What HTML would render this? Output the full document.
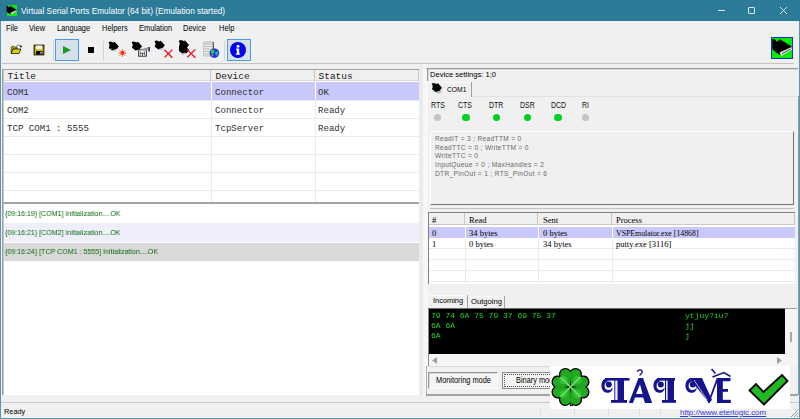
<!DOCTYPE html>
<html><head><meta charset="utf-8">
<style>
*{margin:0;padding:0;box-sizing:border-box}
html,body{width:800px;height:419px;overflow:hidden;background:#f0f0f0;font-family:"Liberation Sans",sans-serif;position:relative}
.a{position:absolute}
.t{position:absolute;white-space:nowrap;line-height:1;transform-origin:0 0;-webkit-font-smoothing:antialiased}
.mono{font-family:"Liberation Mono",monospace}
.serif{font-family:"Liberation Serif",serif}
.m{font-size:8.2px;top:25px;color:#000;transform:scaleX(0.91)}
.cm{font-size:9.4px;color:#303030;transform:scaleX(0.97)}
.hd{font-size:9.5px;color:#1a1a1a}
.sig{font-size:8.6px;top:100.5px;color:#111;transform:scaleX(0.81)}
.led{position:absolute;top:113.5px;width:7.4px;height:7.4px;border-radius:50%;background:#00d020}
.led.off{background:#c4c4c4}
.lg{font-size:7.6px;color:#0c680c;will-change:transform;transform:scaleX(0.93)}
.pl{font-size:8.5px;color:#000}
.gl{position:absolute;background:#ebebeb}
</style></head><body>
<!-- window frame -->
<div class="a" style="left:0;top:0;width:800px;height:21px;background:#2b7a98"></div>
<div class="a" style="left:0;top:21px;width:1px;height:398px;background:#5896b2"></div>
<div class="a" style="left:799px;top:21px;width:1px;height:398px;background:#5896b2"></div>
<div class="a" style="left:0;top:418px;width:800px;height:1px;background:#5e9ab4"></div>
<!-- title icon -->
<svg class="a" style="left:6px;top:5px" width="11" height="11" viewBox="0 0 22 22">
<rect x="0" y="0" width="22" height="22" fill="#10e810"/>
<path d="M0 1.5 L4.2 2 L5.5 4.5 L7 4.5 L8.4 1.5 L21 9.3 L21 11.3 L10.5 17 L8.5 18.5 L0 13Z" fill="#000"/>
<path d="M8.5 15.5 L20.5 9.9 L21 13 L10.5 19.5Z" fill="#c8c8c8"/>
<rect x="0" y="0" width="1.5" height="22" fill="#3040d0"/>
</svg>
<div class="t" style="left:21px;top:6px;font-size:9.8px;color:#fff;transform:scaleX(0.845)">Virtual Serial Ports Emulator (64 bit) (Emulation started)</div>
<!-- window controls -->
<div class="a" style="left:718px;top:10px;width:7px;height:1px;background:#e4eef2"></div>
<div class="a" style="left:748px;top:7px;width:7px;height:7px;border:1px solid #dce9ee;border-radius:1px"></div>
<svg class="a" style="left:780px;top:7px" width="7" height="7" viewBox="0 0 7 7"><path d="M0 0L7 7M7 0L0 7" stroke="#e4eef2" stroke-width="0.9"/></svg>

<!-- menu -->
<div class="t m" style="left:6px">File</div>
<div class="t m" style="left:29px">View</div>
<div class="t m" style="left:57px">Language</div>
<div class="t m" style="left:102px">Helpers</div>
<div class="t m" style="left:139px">Emulation</div>
<div class="t m" style="left:183px">Device</div>
<div class="t m" style="left:219px">Help</div>

<!-- toolbar -->
<div class="a" style="left:55px;top:39px;width:24px;height:22px;background:#d5e1ec;border:1px solid #4a9ae8"></div>
<div class="a" style="left:227px;top:39px;width:24px;height:22px;background:#d5e1ec;border:1px solid #4a9ae8"></div>
<div class="a" style="left:53px;top:41px;width:1px;height:19px;background:#d4d4d4"></div>
<div class="a" style="left:103px;top:41px;width:1px;height:19px;background:#d4d4d4"></div>
<div class="a" style="left:224px;top:41px;width:1px;height:19px;background:#d4d4d4"></div>
<div class="a" style="left:2px;top:63px;width:792px;height:1px;background:#c4c4c4"></div>

<!-- open icon -->
<svg class="a" style="left:10px;top:44px" width="13" height="11" viewBox="10 44 13 11">
<path d="M11.2 47 L13 46 L14.5 47 L17 47 L17 49 L13 49 L11.2 53.5Z" fill="#b0aa10" stroke="#1a1a00" stroke-width="0.6"/>
<path d="M11.2 53.5 L13 49 L21 49 L19 53.5Z" fill="#d8d018" stroke="#1a1a00" stroke-width="0.8"/>
<path d="M16.5 46 Q18.5 44.2 20.5 45.8" stroke="#444" stroke-width="0.7" fill="none"/>
<circle cx="21" cy="46.5" r="0.9" fill="#000"/>
</svg>
<!-- save icon -->
<svg class="a" style="left:33px;top:44px" width="12" height="12" viewBox="33 44 12 12">
<rect x="34.2" y="45.2" width="9.6" height="9.6" fill="#c4bc18" stroke="#2a2a08" stroke-width="1.2"/>
<rect x="36" y="45.5" width="6" height="3.6" fill="#f2f2f2"/>
<rect x="36" y="51" width="6.5" height="3.5" fill="#0a0a0a"/>
<rect x="40.3" y="51.8" width="1.4" height="1.8" fill="#e0e0e0"/>
</svg>
<!-- play -->
<svg class="a" style="left:63px;top:46px" width="8" height="8" viewBox="0 0 8 8"><path d="M0 0 L8 4 L0 8Z" fill="#1a9a1a"/></svg>
<!-- stop -->
<div class="a" style="left:88px;top:47px;width:6px;height:6px;background:#000"></div>

<!-- device icons -->
<svg class="a" style="left:104px;top:38px" width="120" height="22" viewBox="104 38 120 22">
<defs>
<path id="cb" d="M-5.3 -4.8 L-3 -5.4 L-0.5 -4.4 L1 -5 L5 -0.5 L2.5 2.8 L-1.5 3.6 L-5 1 L-4.2 -2 Z"/>
</defs>
<!-- icon1 -->
<use href="#cb" x="113.8" y="47" fill="#000"/>
<path d="M112.3 50.3 L116.5 48.8 L118.2 49.8 L114 51.8Z" fill="#c4c4c4"/>
<circle cx="111.8" cy="48.5" r="0.5" fill="#a0a040"/>
<g stroke="#ff5a5a" stroke-width="0.9"><path d="M122.4 49v8M118.4 53h8M119.6 50.2l5.6 5.6M125.2 50.2l-5.6 5.6"/></g>
<circle cx="122.4" cy="53" r="1.9" fill="#ff1800"/>
<circle cx="121.6" cy="53.9" r="0.7" fill="#ffc000"/>
<!-- icon2 -->
<use href="#cb" x="137" y="46.8" fill="#000"/>
<rect x="138.6" y="49.8" width="7.8" height="6.4" fill="#fafafa" stroke="#3a3a3a" stroke-width="1"/>
<path d="M140.3 51.5v4M142.5 52.5v3.5M144.6 51.5v4M140.3 53.3h4.3" stroke="#444" stroke-width="0.8"/>
<path d="M141 49.3 L148 47.3 L148.5 49.5 L143 50.5Z" fill="#999"/>
<rect x="148.4" y="47" width="1.5" height="4.5" fill="#1a1a50"/>
<!-- icon3 -->
<use href="#cb" x="159.8" y="45.8" fill="#000"/>
<path d="M158.5 49 L162.5 48 L164 49 L160 50.5Z" fill="#c8c8c8"/>
<path d="M164.4 49.8 L172.4 57.8 M172.4 49.6 L164.6 57.4" stroke="#e8101c" stroke-width="1.3"/>
<!-- icon4 -->
<use href="#cb" x="184" y="45.5" fill="#000"/>
<path d="M179 46 L183 45 L189 49.5 L187 53 L183 54 L179 51Z" fill="#000"/>
<path d="M181 53.5 L185 52.5 L186.5 53.5 L182.5 55Z" fill="#b8b8b8"/>
<path d="M187.2 49.6 L195.4 57.8 M195.4 49.4 L187.4 57.2" stroke="#e8101c" stroke-width="1.3"/>
<!-- icon5 -->
<rect x="203.8" y="42" width="9.8" height="14" fill="#ececec" stroke="#a8a8a8" stroke-width="0.7"/>
<rect x="203.8" y="42" width="9.8" height="3" fill="#cfcfcf"/>
<path d="M204.5 46.5h8M204.5 49h8M204.5 51.5h8M204.5 54h8" stroke="#b0b0b0" stroke-width="0.8"/>
<rect x="212.8" y="42" width="0.9" height="9" fill="#333"/>
<circle cx="214.4" cy="53.2" r="4.8" fill="#1a30e0"/>
<path d="M211 50.5 Q213 49 214.5 50.5 L213.5 53.5 L211.5 54.5Z" fill="#20e040"/>
<path d="M215 52 L218 51 L218.5 54.5 L216 56Z" fill="#30a0a0"/>
<circle cx="212.5" cy="55.5" r="1" fill="#c08020"/>
</svg>
<!-- info -->
<svg class="a" style="left:230px;top:42px" width="16" height="16" viewBox="0 0 16 16">
<circle cx="8" cy="8" r="8" fill="#0000f0"/>
<circle cx="8" cy="4.2" r="1.5" fill="#fff"/>
<path d="M6 6.5 H9.2 V11.5 H10.2 V12.8 H5.8 V11.5 H6.8 V7.8 H6Z" fill="#fff"/>
</svg>
<!-- top-right connector icon -->
<svg class="a" style="left:771px;top:37px" width="22" height="22" viewBox="0 0 22 22">
<rect x="0.5" y="0.5" width="21" height="21" fill="#00ec00" stroke="#1a30e0" stroke-width="1"/>
<path d="M1.2 2.1 L4.2 2.4 L5.5 4.5 L7 4.5 L8.4 2.1 L20.4 9.3 L20.6 11.3 L10.5 17 L8.5 17.9 L1.2 12.2Z" fill="#000"/>
<path d="M8.5 15.5 L20.5 9.9 L20.8 12.7 L10.5 19Z" fill="#e4e4e4"/>
<path d="M11 16.8 L19.5 12" stroke="#333" stroke-width="0.9"/>
</svg>

<!-- ============ top list ============ -->
<div class="a" style="left:2px;top:69px;width:418px;height:1px;background:#a0a0a0"></div>
<div class="a" style="left:2px;top:69px;width:1px;height:134px;background:#a0a0a0"></div>
<div class="a" style="left:3px;top:70px;width:416px;height:132px;background:#fff"></div>
<div class="a" style="left:3px;top:70px;width:416px;height:11px;background:#efefef"></div>
<div class="a" style="left:3px;top:80px;width:416px;height:1px;background:#d6d6d6"></div>
<div class="a" style="left:210px;top:70px;width:1px;height:11px;background:#c8c8c8"></div>
<div class="a" style="left:314px;top:70px;width:1px;height:11px;background:#c8c8c8"></div>
<div class="a" style="left:418px;top:70px;width:1px;height:11px;background:#d0d0d0"></div>
<div class="t mono hd" style="left:7.5px;top:71.7px">Title</div>
<div class="t mono hd" style="left:215.5px;top:71.7px">Device</div>
<div class="t mono hd" style="left:318.5px;top:71.7px">Status</div>
<div class="a" style="left:3px;top:82px;width:416px;height:18px;background:#c8c8fb"></div>
<div class="gl" style="left:3px;top:100px;width:416px;height:1px"></div>
<div class="gl" style="left:3px;top:118px;width:416px;height:1px"></div>
<div class="gl" style="left:3px;top:136px;width:416px;height:1px"></div>
<div class="gl" style="left:3px;top:154px;width:416px;height:1px"></div>
<div class="gl" style="left:3px;top:172px;width:416px;height:1px"></div>
<div class="gl" style="left:3px;top:190px;width:416px;height:1px"></div>
<div class="a" style="left:211px;top:82px;width:1px;height:120px;background:#fff"></div>
<div class="a" style="left:315px;top:82px;width:1px;height:120px;background:#fff"></div>
<div class="gl" style="left:211px;top:100px;width:1px;height:102px"></div>
<div class="gl" style="left:315px;top:100px;width:1px;height:102px"></div>
<div class="a" style="left:3px;top:70px;width:1px;height:132px;background:#c4c4c4"></div>
<div class="t mono cm" style="left:7px;top:88px">COM1</div>
<div class="t mono cm" style="left:215px;top:88px">Connector</div>
<div class="t mono cm" style="left:318px;top:88px">OK</div>
<div class="t mono cm" style="left:7px;top:106px">COM2</div>
<div class="t mono cm" style="left:215px;top:106px">Connector</div>
<div class="t mono cm" style="left:318px;top:106px">Ready</div>
<div class="t mono cm" style="left:7px;top:124px">TCP COM1 : 5555</div>
<div class="t mono cm" style="left:215px;top:124px">TcpServer</div>
<div class="t mono cm" style="left:318px;top:124px">Ready</div>

<!-- ============ log pane ============ -->
<div class="a" style="left:2px;top:202px;width:418px;height:2px;background:#a4a4a4"></div>
<div class="a" style="left:2px;top:204px;width:1px;height:191px;background:#a0a0a0"></div>
<div class="a" style="left:3px;top:204px;width:416px;height:191px;background:#fff"></div>
<div class="a" style="left:3px;top:223px;width:416px;height:19px;background:#efeffc"></div>
<div class="a" style="left:3px;top:243px;width:416px;height:18px;background:#d9d9d9"></div>
<div class="a" style="left:3px;top:204px;width:1px;height:191px;background:#c4c4c4"></div>
<div class="t lg" style="left:5px;top:210px">{09:16:19} [COM1] Initialization....OK</div>
<div class="t lg" style="left:5px;top:229px">{09:16:21} [COM2] Initialization....OK</div>
<div class="t lg" style="left:5px;top:248px">{09:16:24} [TCP COM1 : 5555] Initialization....OK</div>

<!-- ============ right pane ============ -->
<div class="a" style="left:419px;top:64px;width:4px;height:331px;background:#ebebeb"></div>
<div class="a" style="left:423px;top:64px;width:5px;height:331px;background:#f7f7f7"></div>
<div class="a" style="left:426px;top:68px;width:372px;height:1px;background:#999"></div>
<div class="a" style="left:428px;top:69px;width:370px;height:1px;background:#dadada"></div>
<div class="a" style="left:427px;top:68px;width:1px;height:13px;background:#999"></div>
<div class="a" style="left:428px;top:69px;width:1px;height:12px;background:#dadada"></div>
<div class="t" style="left:430px;top:71px;font-size:7.8px;color:#000;transform:scaleX(0.97)">Device settings: 1;0</div>
<!-- tab -->
<div class="a" style="left:471px;top:82px;width:1px;height:15px;background:#a0a0a0"></div>
<div class="a" style="left:428px;top:82px;width:43px;height:1px;background:#fafafa"></div>
<svg class="a" style="left:430px;top:82px" width="16" height="14" viewBox="430 82 16 14"><use href="#cb" x="437" y="88.3" fill="#000"/><path d="M436 92.5 L440.5 90.5 L442.5 91.8 L438 93.8Z" fill="#b8b8b8"/></svg>
<div class="t" style="left:447px;top:86px;font-size:7.8px;color:#000;transform:scaleX(0.86)">COM1</div>
<div class="a" style="left:472px;top:96px;width:326px;height:1px;background:#e2e2e2"></div>
<div class="a" style="left:798px;top:96px;width:1px;height:299px;background:#8a9ca4"></div>

<!-- signal labels & leds -->
<div class="t sig" style="left:431px">RTS</div>
<div class="t sig" style="left:458px">CTS</div>
<div class="t sig" style="left:489px">DTR</div>
<div class="t sig" style="left:520px">DSR</div>
<div class="t sig" style="left:551px">DCD</div>
<div class="t sig" style="left:582px">RI</div>
<div class="led off" style="left:433.8px"></div>
<div class="led" style="left:462.2px"></div>
<div class="led" style="left:492.8px"></div>
<div class="led" style="left:523.8px"></div>
<div class="led" style="left:554.4px"></div>
<div class="led off" style="left:581.9px"></div>

<!-- info box -->
<div class="a" style="left:430px;top:131px;width:364px;height:74px;border-top:1px solid #fff;border-left:1px solid #fff;border-right:1px solid #707070;border-bottom:1px solid #707070"></div>
<div class="t" style="left:435px;top:134.8px;font-size:6.6px;letter-spacing:0.33px;color:#6a6a6a;line-height:8.8px">ReadIT = 3 ; ReadTTM = 0<br>ReadTTC = 0 ; WriteTTM = 0<br>WriteTTC = 0<br>InputQueue = 0 ; MaxHandles = 2<br>DTR_PinOut = 1 ; RTS_PinOut = 6</div>
<div class="a" style="left:430px;top:208px;width:364px;height:1px;background:#c4c4c4"></div>

<!-- process list -->
<div class="a" style="left:428px;top:212px;width:367px;height:1px;background:#808080"></div>
<div class="a" style="left:428px;top:212px;width:1px;height:72px;background:#808080"></div>
<div class="a" style="left:429px;top:213px;width:366px;height:71px;background:#fff"></div>
<div class="a" style="left:429px;top:213px;width:366px;height:12px;background:#f0f0f0"></div>
<div class="a" style="left:429px;top:224px;width:366px;height:1px;background:#c8c8c8"></div>
<div class="a" style="left:464px;top:213px;width:1px;height:12px;background:#c8c8c8"></div>
<div class="a" style="left:537px;top:213px;width:1px;height:12px;background:#c8c8c8"></div>
<div class="a" style="left:611px;top:213px;width:1px;height:12px;background:#c8c8c8"></div>
<div class="a" style="left:794px;top:213px;width:1px;height:12px;background:#c8c8c8"></div>
<div class="a" style="left:429px;top:227px;width:366px;height:11px;background:#c8c8fb"></div>
<div class="gl" style="left:429px;top:248px;width:366px;height:1px"></div>
<div class="gl" style="left:429px;top:259px;width:366px;height:1px"></div>
<div class="gl" style="left:429px;top:270px;width:366px;height:1px"></div>
<div class="gl" style="left:429px;top:281px;width:366px;height:1px"></div>
<div class="a" style="left:465px;top:225px;width:1px;height:13px;background:#fff"></div>
<div class="a" style="left:538px;top:225px;width:1px;height:13px;background:#fff"></div>
<div class="a" style="left:612px;top:225px;width:1px;height:13px;background:#fff"></div>
<div class="gl" style="left:465px;top:238px;width:1px;height:45px"></div>
<div class="gl" style="left:538px;top:238px;width:1px;height:45px"></div>
<div class="gl" style="left:612px;top:238px;width:1px;height:45px"></div>
<div class="t serif pl" style="left:432px;top:216px">#</div>
<div class="t serif pl" style="left:469px;top:216px">Read</div>
<div class="t serif pl" style="left:543px;top:216px">Sent</div>
<div class="t serif pl" style="left:616px;top:216px">Process</div>
<div class="t serif pl" style="left:432px;top:229px">0</div>
<div class="t serif pl" style="left:469px;top:229px">34 bytes</div>
<div class="t serif pl" style="left:543px;top:229px">0 bytes</div>
<div class="t serif pl" style="left:616px;top:229px;transform:scaleX(0.92)">VSPEmulator.exe [14868]</div>
<div class="t serif pl" style="left:432px;top:240px">1</div>
<div class="t serif pl" style="left:469px;top:240px">0 bytes</div>
<div class="t serif pl" style="left:543px;top:240px">34 bytes</div>
<div class="t serif pl" style="left:616px;top:240px">putty.exe [3116]</div>

<!-- incoming/outgoing tabs -->
<div class="a" style="left:428px;top:295px;width:39px;height:1px;background:#fafafa"></div>
<div class="a" style="left:467px;top:295px;width:1px;height:14px;background:#a0a0a0"></div>
<div class="t" style="left:433px;top:297px;font-size:7.8px;color:#000;transform:scaleX(0.95)">Incoming</div>
<div class="a" style="left:468px;top:296px;width:36px;height:1px;background:#fafafa"></div>
<div class="a" style="left:504px;top:296px;width:1px;height:13px;background:#a0a0a0"></div>
<div class="t" style="left:471px;top:298px;font-size:7.8px;color:#000;transform:scaleX(0.98)">Outgoing</div>
<div class="a" style="left:505px;top:308px;width:292px;height:1px;background:#a0a0a0"></div>

<!-- console -->
<div class="a" style="left:428px;top:308px;width:357px;height:1px;background:#707070"></div>
<div class="a" style="left:428px;top:309px;width:357px;height:45px;background:#000"></div>
<div class="a" style="left:785px;top:309px;width:12px;height:57px;background:#f4f4f4"></div>
<div class="t mono" style="left:431px;top:311px;font-size:8px;line-height:9.8px;color:#22d022;will-change:transform">79 74 6A 75 79 37 69 75 37<br>6A 6A<br>6A</div>
<div class="t mono" style="left:685px;top:311px;font-size:8px;line-height:9.8px;color:#22d022;will-change:transform">ytjuy?iu?<br>jj<br>j</div>
<div class="a" style="left:790px;top:332px;width:2px;height:10px;background:#a8a8a8"></div>
<div class="a" style="left:429px;top:354px;width:356px;height:12px;background:#f5f5f5"></div>
<svg class="a" style="left:432px;top:357px" width="5" height="7" viewBox="0 0 5 7"><path d="M5 0 L0 3.5 L5 7Z" fill="#a0a0a0"/></svg>
<svg class="a" style="left:777px;top:357px" width="5" height="7" viewBox="0 0 5 7"><path d="M0 0 L5 3.5 L0 7Z" fill="#a0a0a0"/></svg>
<div class="a" style="left:428px;top:309px;width:1px;height:57px;background:#8a8a8a"></div>
<div class="a" style="left:428px;top:366px;width:357px;height:1px;background:#dadada"></div>
<div class="a" style="left:426px;top:366px;width:1px;height:29px;background:#b0b0b0"></div>

<!-- buttons -->
<div class="a" style="left:428px;top:372px;width:70px;height:17px;background:#f4f4f4;border:1px solid #fafafa;border-top-color:#999;border-left-color:#999;box-shadow:inset 1px 1px 0 #d8d8d8"></div>
<div class="t" style="left:436px;top:376.5px;font-size:8.2px;color:#000;transform:scaleX(0.9)">Monitoring mode</div>
<div class="a" style="left:502px;top:372px;width:70px;height:17px;background:#f4f4f4;border:1px solid #8a8a8a"></div>
<div class="a" style="left:504px;top:374px;width:66px;height:13px;border:1px dotted #555"></div>
<div class="t" style="left:516px;top:376.5px;font-size:8.2px;color:#000;transform:scaleX(0.9)">Binary mode</div>

<div class="a" style="left:426px;top:394px;width:372px;height:2px;background:#a4a4a4"></div>

<!-- status bar -->
<svg class="a" style="left:789px;top:408px" width="10" height="10" viewBox="0 0 10 10"><path d="M9 2 L2 9 M9 5 L5 9 M9 8 L8 9" stroke="#9a9a9a" stroke-width="1"/></svg>
<div class="a" style="left:540px;top:409px;width:1px;height:7px;background:#ecd4ec"></div><div class="a" style="left:574px;top:409px;width:1px;height:7px;background:#ecd4ec"></div><div class="a" style="left:608px;top:409px;width:1px;height:7px;background:#ecd4ec"></div><div class="a" style="left:639px;top:409px;width:1px;height:7px;background:#ecd4ec"></div><div class="a" style="left:660px;top:409px;width:1px;height:7px;background:#ecd4ec"></div>
<div class="a" style="left:1px;top:402px;width:798px;height:1px;background:#c8c8c8"></div>
<div class="t" style="left:4px;top:408px;font-size:8px;color:#000;transform:scaleX(0.92)">Ready</div>

<!-- watermark -->
<div class="a" style="left:550px;top:366px;width:240px;height:43px;background:#fff"></div>
<svg class="a" style="left:548px;top:364px" width="46" height="46" viewBox="-23 -23 46 46">
<defs><path id="hl" d="M0 -1 C-2 -4 -10.5 -6 -10.5 -12 C-10.5 -16.5 -6 -19 -2.5 -16.8 C-1.2 -16 -0.5 -15 0 -13.5 C0.5 -15 1.2 -16 2.5 -16.8 C6 -19 10.5 -16.5 10.5 -12 C10.5 -6 2 -4 0 -1 Z"/></defs>
<g transform="translate(-0.5 0)">
<g stroke="#000" stroke-width="2.6" fill="#000" stroke-linejoin="round">
<use href="#hl" transform="rotate(-45)"/><use href="#hl" transform="rotate(45)"/><use href="#hl" transform="rotate(135)"/><use href="#hl" transform="rotate(-135)"/>
<path d="M0 10 L1 19" stroke-width="3"/>
</g>
<g fill="#22a822">
<use href="#hl" transform="rotate(-45)"/><use href="#hl" transform="rotate(45)"/><use href="#hl" transform="rotate(135)"/><use href="#hl" transform="rotate(-135)"/>
</g>
<path d="M0 11 L0.8 18" stroke="#22a822" stroke-width="1.4"/>
<g fill="#30c030"><circle cx="-7" cy="-7" r="4"/><circle cx="7" cy="-7" r="4"/><circle cx="-7" cy="7" r="4"/><circle cx="7" cy="7" r="4"/></g>
<path d="M-1 0 H-12 M1 0 H12 M0 -1 V-12 M0 1 V12" stroke="#0d5a0d" stroke-width="0.8" opacity="0.3"/>
<path d="M-10 -10 L10 10 M10 -10 L-10 10" stroke="#78e078" stroke-width="1.5"/>
</g>
</svg>
<svg class="a" style="left:598px;top:366px" width="140" height="40" viewBox="598 366 140 40">
<g fill="#14148c">
<!-- T -->
<rect x="605" y="378" width="24.5" height="2.6"/>
<path d="M606 378.5 C600 379.5 599.5 392.5 607.5 392.8 C611 392.8 613 390 612.5 387.5 L611 389.5 C609.5 390 606.5 390.8 605 388 C604 385 605 382 608 381.2Z"/>
<circle cx="608.8" cy="384.6" r="3"/>
<rect x="614.3" y="380" width="1.1" height="21"/>
<rect x="617.5" y="380" width="6.5" height="21"/>
<rect x="611" y="400" width="16" height="2.8"/>
<!-- A -->
<path d="M638.5 378 L643 378 L652.2 403 L645 403 L643.2 397.5 L635 397.5 L633 403 L628.8 403 Z M640 384.5 L636 394 L642.6 394 Z" fill-rule="evenodd"/>
<path d="M637 371.5 Q640 368.5 642 370.8 Q643 373 639.5 375.5" fill="none" stroke="#14148c" stroke-width="1.3"/>
<!-- I -->
<rect x="657" y="378" width="18" height="2.6"/>
<path d="M658 378.5 C652 379.5 651.5 392.5 659.5 392.8 C663 392.8 665 390 664.5 387.5 L663 389.5 C661.5 390 658.5 390.8 657 388 C656 385 657 382 660 381.2Z"/>
<circle cx="660.8" cy="384.6" r="3"/>
<rect x="665" y="380" width="1.1" height="21"/>
<rect x="667.5" y="380" width="6.5" height="21"/>
<rect x="662" y="400" width="14" height="2.8"/>
<!-- V -->
<path d="M690 378.5 C684 379.5 683.5 392.5 691.5 392.8 C695 392.8 697 390 696.5 387.5 L695 389.5 C693.5 390 690.5 390.8 689 388 C688 385 689 382 692 381.2Z"/>
<circle cx="692.8" cy="384.6" r="3"/>
<path d="M689 378 L702 378 L712 400 L709 403 Z"/>
<path d="M708.5 403 L717.5 378.5" stroke="#14148c" stroke-width="1.8"/>
<path d="M711.5 369 L715.5 373.5" stroke="#14148c" stroke-width="1.6"/>
<!-- E -->
<rect x="717" y="378" width="5.8" height="25"/>
<rect x="717" y="378" width="13.5" height="3.2"/>
<rect x="717" y="389" width="11" height="2.8"/>
<rect x="717" y="399.8" width="13.8" height="3.2"/>
<path d="M712.5 377 L724 372.5 L730.5 376.5" fill="none" stroke="#14148c" stroke-width="1.5"/>
</g>
<g stroke="#dfe0f6" stroke-width="0.8">
<path d="M616 381 V400"/><path d="M666.8 381 V400"/><path d="M694 380 L707 400"/>
</g>
</svg>
<svg class="a" style="left:744px;top:368px" width="50" height="42" viewBox="744 368 50 42">
<path d="M749.5 390.5 L756 384 L763.5 392 L782 375 L787.5 381 L764 404.5 Z" fill="#22b822" stroke="#000" stroke-width="1.8" stroke-linejoin="miter"/>
</svg>
<div class="t" style="left:680px;top:408.5px;font-size:7.5px;color:#3434e0;text-decoration:underline;transform:scaleX(1.06)">http://www.eterlogic.com</div>
</body></html>
